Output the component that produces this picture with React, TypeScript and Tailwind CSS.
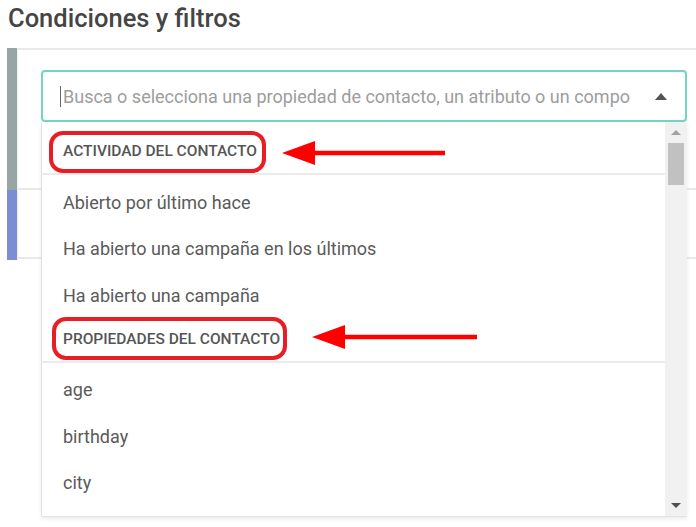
import React from 'react';

type Group = { title: string; items: string[] };

const groups: Group[] = [
  {
    title: 'Actividad del contacto',
    items: ['Abierto por último hace', 'Ha abierto una campaña en los últimos', 'Ha abierto una campaña'],
  },
  {
    title: 'Propiedades del contacto',
    items: ['age', 'birthday', 'city'],
  },
];

const Annotations: React.FC = () => (
  <svg
    className="absolute left-0 top-0 pointer-events-none"
    width={696}
    height={527}
    viewBox="0 0 696 527"
  >
    <rect x={51} y={133} width={213} height={38} rx={12} fill="none" stroke="#e81e25" strokeWidth={4} />
    <line x1={312} y1={153} x2={445} y2={153} stroke="#ff0000" strokeWidth={4.5} />
    <polygon points="282,153 315,141 315,165" fill="#ff0000" />
    <rect x={54} y={319} width={231} height={39} rx={12} fill="none" stroke="#e81e25" strokeWidth={4} />
    <line x1={343} y1={337} x2={477} y2={337} stroke="#ff0000" strokeWidth={4.5} />
    <polygon points="312,337 345,325 345,349" fill="#ff0000" />
  </svg>
);

const Dropdown: React.FC = () => (
  <div className="absolute top-[50px] left-[-2px] right-[-2px] h-[395px] flex bg-white border-l border-b border-[#e3e3e3] shadow-[0_2px_4px_rgba(0,0,0,0.08)]">
    <div className="flex-1 overflow-hidden pt-[9px]">
      {groups.map((g) => (
        <div key={g.title}>
          <div className="h-[44px] px-[21px] flex items-center border-b-2 border-[#ebebeb] text-[15.5px] font-medium uppercase text-[#555] whitespace-nowrap">
            {g.title}
          </div>
          <div className="pt-[4px]">
            {g.items.map((it) => (
              <div key={it} className="h-[46.5px] px-[21px] flex items-center text-[18px] text-[#5a5a5a] whitespace-nowrap">
                {it}
              </div>
            ))}
          </div>
        </div>
      ))}
    </div>
    {/* scrollbar */}
    <div className="w-[22px] bg-[#f1f1f1] flex flex-col items-center">
      <div className="h-[21px] flex items-center justify-center">
        <div className="w-0 h-0 border-l-[5px] border-r-[5px] border-b-[5px] border-l-transparent border-r-transparent border-b-[#a3a3a3]" />
      </div>
      <div className="w-[16px] h-[42px] bg-[#c1c1c1]" />
      <div className="flex-1" />
      <div className="h-[22px] flex items-center justify-center">
        <div className="w-0 h-0 border-l-[5px] border-r-[5px] border-t-[5px] border-l-transparent border-r-transparent border-t-[#505050]" />
      </div>
    </div>
  </div>
);

export default function App() {
  return (
    <div className="w-[696px] h-[527px] bg-white relative overflow-hidden font-[Roboto,sans-serif]">
      <h2 className="h-[48px] px-[8px] pt-[3px] text-[25.5px] leading-[30px] font-medium text-[#454545] whitespace-nowrap">
        Condiciones y filtros
      </h2>

      <div className="flex ml-[7px]">
        <div className="w-[10px] flex flex-col">
          <div className="h-[142px] bg-[#97a6a5]" />
          <div className="h-[70px] bg-[#7b8ed4]" />
        </div>
        <div className="flex-1 border-l border-[#eeeeee]">
          <div className="h-[142px] border-t-2 border-b-2 border-[#e9e9e9] pt-[20px]">
            <div className="relative ml-[23px] mr-[9px] h-[52px] border-2 border-[#74d3c1] rounded-[4px] flex items-center pl-[17px] pr-[18px] bg-white">
              <span className="w-px h-[21px] bg-[#666]" />
              <span className="ml-[2px] flex-1 overflow-hidden whitespace-nowrap text-[18px] text-[#9d9d9d]">
                Busca o selecciona una propiedad de contacto, un atributo o un compo
              </span>
              <span className="ml-[20px] w-0 h-0 border-l-[6px] border-r-[6px] border-b-[7px] border-l-transparent border-r-transparent border-b-[#555]" />
              <Dropdown />
            </div>
          </div>
          <div className="h-[69px] border-b-2 border-[#e9e9e9]" />
        </div>
      </div>

      <Annotations />
    </div>
  );
}
